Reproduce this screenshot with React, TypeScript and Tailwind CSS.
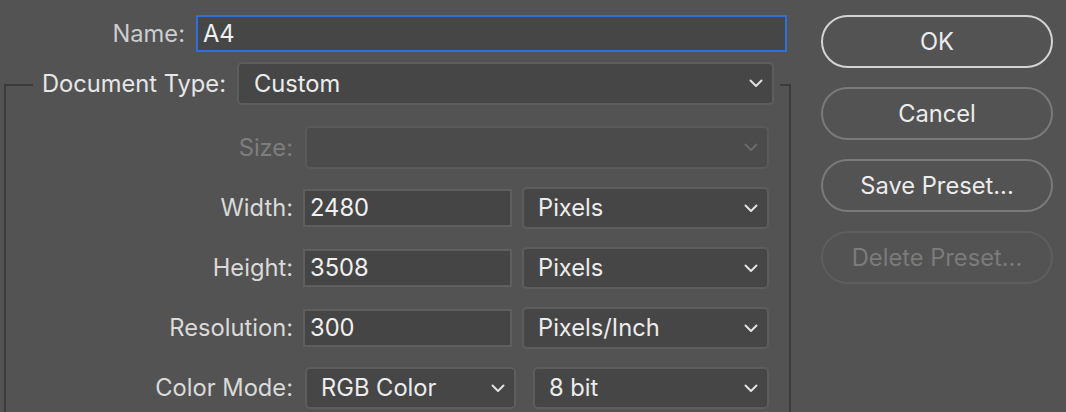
import React from "react";

const Chevron = ({ color = "#e0e0e0" }: { color?: string }) => (
  <svg width="14" height="9" viewBox="0 0 14 9" fill="none">
    <polyline points="1.5,1.5 7,7 12.5,1.5" stroke={color} strokeWidth="2" strokeLinecap="round" strokeLinejoin="round" />
  </svg>
);

const Select = ({
  value,
  w,
  h = "h-[42px]",
  disabled = false,
  ml = "ml-[12px]",
}: {
  value: string;
  w: string;
  h?: string;
  disabled?: boolean;
  ml?: string;
}) => (
  <div
    className={`${w} ${h} ${ml} flex items-center justify-between rounded-[5px] border-2 pl-[14px] pr-[9px] ${
      disabled ? "border-[#5a5a5a] bg-[#4b4b4b]" : "border-[#5d5d5d] bg-[#464646]"
    }`}
  >
    <span className="text-[#ececec]">{value}</span>
    <Chevron color={disabled ? "#6a6a6a" : "#e2e2e2"} />
  </div>
);

const Input = ({ value, w = "w-[209px]", ml = "ml-[10px]" }: { value: string; w?: string; ml?: string }) => (
  <div className={`${w} ${ml} h-[38px] flex items-center border-2 border-[#5f5f5f] bg-[#454545] pl-[5px] text-[#f0f0f0]`}>
    {value}
  </div>
);

const Label = ({ text, dim = false }: { text: string; dim?: boolean }) => (
  <div className={`w-[287px] text-right ${dim ? "text-[#7e7e7e]" : "text-[#dadada]"}`}>{text}</div>
);

const Btn = ({ text, variant }: { text: string; variant: "ok" | "normal" | "disabled" }) => {
  const cls =
    variant === "ok"
      ? "border-[#d4d4d4] text-[#ececec]"
      : variant === "normal"
      ? "border-[#7a7a7a] text-[#ececec]"
      : "border-[#5e5e5e] text-[#7b7b7b]";
  return (
    <div className={`h-[53px] w-[232px] rounded-full border-2 ${cls} flex items-center justify-center`}>{text}</div>
  );
};

export default function App() {
  return (
    <div
      className="w-[1066px] h-[412px] overflow-hidden bg-[#535353] flex text-[23.7px] leading-none"
      style={{ fontFamily: "Inter, 'Noto Sans', 'Liberation Sans', sans-serif" }}
    >
      {/* left panel */}
      <div className="w-[821px] shrink-0 flex flex-col">
        {/* Name row */}
        <div className="flex items-center mt-[15px]">
          <div className="w-[185px] text-right text-[#cdcdcd]">Name:</div>
          <div className="ml-[11px] w-[591px] h-[37px] flex items-center border-2 border-[#2f6fd6] bg-[#464646] pl-[5px] text-[#f0f0f0]">
            A4
          </div>
        </div>
        {/* Document type row */}
        <div className="flex items-stretch mt-[10px] ml-[4px] h-[43px]">
          <div className="w-[29px] flex flex-col">
            <div className="mt-[22px] flex-1 border-t-2 border-l-2 border-[#3b3b3b]" />
          </div>
          <div className="w-[193px] flex items-center justify-end text-[#e6e6e6]">Document Type:</div>
          <div className="ml-[11px] w-[537px] h-[43px] flex items-center justify-between rounded-[5px] border-2 border-[#5d5d5d] bg-[#464646] pl-[15px] pr-[9px]">
            <span className="text-[#ececec]">Custom</span>
            <Chevron />
          </div>
          <div className="ml-[6px] w-[11px] flex flex-col">
            <div className="mt-[22px] flex-1 border-t-2 border-r-2 border-[#3b3b3b]" />
          </div>
        </div>
        {/* group body */}
        <div className="ml-[4px] w-[787px] flex-1 border-l-2 border-r-2 border-[#3b3b3b] pt-[21px] flex flex-col gap-[18px]">
          <div className="flex items-center h-[43px]">
            <Label text="Size:" dim />
            <Select value="" w="w-[464px]" h="h-[43px]" disabled />
          </div>
          <div className="flex items-center h-[42px]">
            <Label text="Width:" />
            <Input value="2480" />
            <Select value="Pixels" w="w-[247px]" ml="ml-[10px]" />
          </div>
          <div className="flex items-center h-[42px]">
            <Label text="Height:" />
            <Input value="3508" />
            <Select value="Pixels" w="w-[247px]" ml="ml-[10px]" />
          </div>
          <div className="flex items-center h-[42px]">
            <Label text="Resolution:" />
            <Input value="300" />
            <Select value="Pixels/Inch" w="w-[247px]" ml="ml-[10px]" />
          </div>
          <div className="flex items-center h-[42px]">
            <Label text="Color Mode:" />
            <Select value="RGB Color" w="w-[211px]" />
            <Select value="8 bit" w="w-[236px]" ml="ml-[17px]" />
          </div>
        </div>
      </div>
      {/* buttons */}
      <div className="flex flex-col gap-[19px] pt-[15px]">
        <Btn text="OK" variant="ok" />
        <Btn text="Cancel" variant="normal" />
        <Btn text="Save Preset..." variant="normal" />
        <Btn text="Delete Preset..." variant="disabled" />
      </div>
    </div>
  );
}
